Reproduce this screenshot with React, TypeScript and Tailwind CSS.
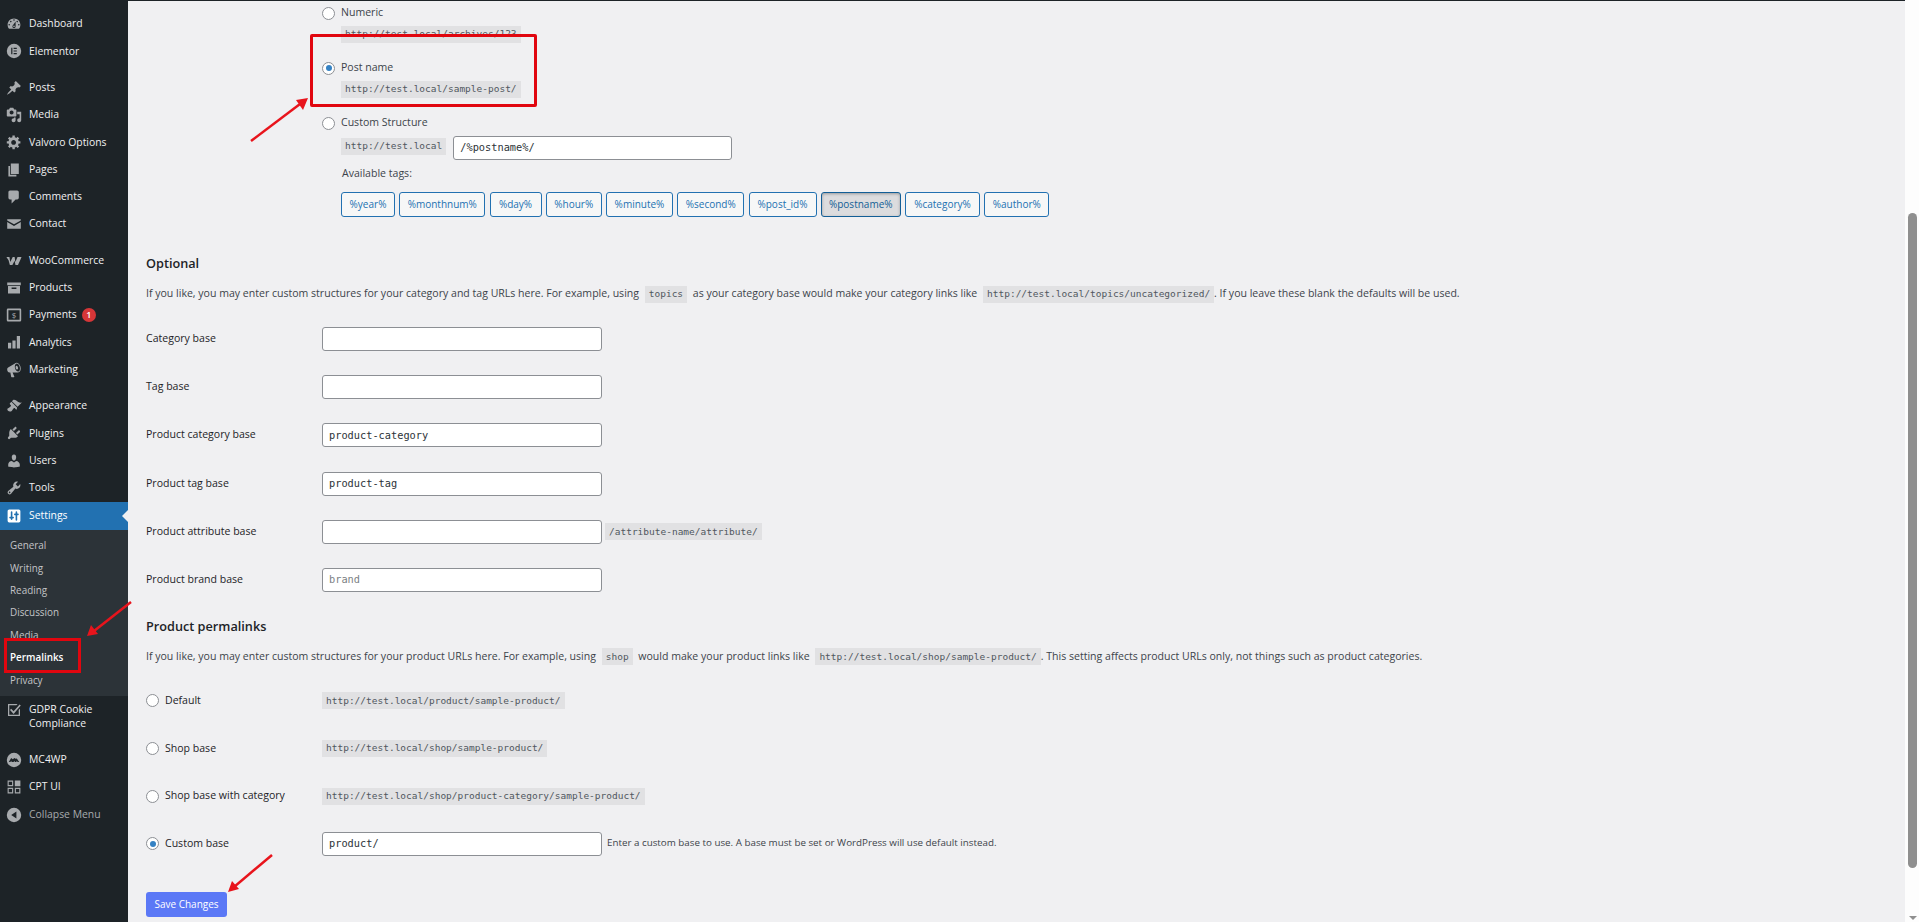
const ic = {
  dashboard:
    "M3.76 16h12.48c1.1-1.37 1.76-3.11 1.76-5 0-4.42-3.58-8-8-8s-8 3.58-8 8c0 1.89.66 3.63 1.76 5zM10 4c.55 0 1 .45 1 1s-.45 1-1 1-1-.45-1-1 .45-1 1-1zM6 6c.55 0 1 .45 1 1s-.45 1-1 1-1-.45-1-1 .45-1 1-1zm8 0c.55 0 1 .45 1 1s-.45 1-1 1-1-.45-1-1 .45-1 1-1zm-5.37 5.55L12 7v6c0 1.1-.9 2-2 2s-2-.9-2-2c0-.57.24-1.08.63-1.45zM4 10c.55 0 1 .45 1 1s-.45 1-1 1-1-.45-1-1 .45-1 1-1zm12 0c.55 0 1 .45 1 1s-.45 1-1 1-1-.45-1-1 .45-1 1-1zm-5 3c0-.55-.45-1-1-1s-1 .45-1 1 .45 1 1 1 1-.45 1-1z",
  elementor: "M10 1a9 9 0 1 0 0 18a9 9 0 0 0 0-18zM6.5 6H8v8H6.5zM9.5 6h4v1.5h-4zM9.5 9.25h4v1.5h-4zM9.5 12.5h4V14h-4z",
  post: "M10.44 3.02l1.82-1.82 6.36 6.35-1.83 1.82c-1.05-.68-2.48-.57-3.41.36l-.75.75c-.92.93-1.04 2.35-.35 3.41l-1.83 1.82-2.41-2.41-2.8 2.79c-.42.42-3.38 2.71-3.8 2.29s1.86-3.39 2.28-3.81l2.79-2.79L4.1 9.36l1.83-1.82c1.05.69 2.48.57 3.4-.36l.75-.75c.93-.92 1.05-2.35.36-3.41z",
  media:
    "M13 11V4c0-.55-.45-1-1-1h-1.67L9 1H5L3.67 3H2c-.55 0-1 .45-1 1v7c0 .55.45 1 1 1h10c.55 0 1-.45 1-1zM7 4.5c1.38 0 2.5 1.12 2.5 2.5S8.38 9.5 7 9.5 4.5 8.38 4.5 7 5.62 4.5 7 4.5zM14 6h5v10.5c0 1.38-1.12 2.5-2.5 2.5S14 17.88 14 16.5s1.12-2.5 2.5-2.5c.17 0 .34.02.5.05V9h-3V6zm-4 8.05V13h2v3.5c0 1.38-1.12 2.5-2.5 2.5S7 17.88 7 16.5 8.12 14 9.5 14c.17 0 .34.02.5.05z",
  gear: "M18 12h-2.18c-.17.7-.44 1.35-.81 1.93l1.54 1.54-2.1 2.1-1.54-1.54c-.58.36-1.23.63-1.91.79V19H8v-2.18c-.68-.16-1.33-.43-1.91-.79l-1.54 1.54-2.12-2.12 1.54-1.54c-.36-.58-.63-1.23-.79-1.91H1V9.03h2.17c.16-.7.44-1.35.8-1.94L2.43 5.55l2.1-2.1 1.54 1.54c.58-.37 1.24-.64 1.93-.81V2h3v2.18c.68.16 1.33.43 1.91.79l1.54-1.54 2.12 2.12-1.54 1.54c.36.59.64 1.24.8 1.94H18V12zm-8.5 1.5c1.66 0 3-1.34 3-3s-1.34-3-3-3-3 1.34-3 3 1.34 3 3 3z",
  page: "M6 15V2h10v13H6zm-1 1h8v2H3V5h2v11z",
  comments: "M5 2h9c1.1 0 2 .9 2 2v7c0 1.1-.9 2-2 2h-2l-5 5v-5H5c-1.1 0-2-.9-2-2V4c0-1.1.9-2 2-2z",
  mail: "M1.5 4h17v1.6L10 10.4 1.5 5.6zM1.5 7.6L10 12.4l8.5-4.8V16h-17z",
  woo: "M.5 5h3.8l1 6.2L8.4 5h2.4l.9 6.2L14.4 5h5c-1.2 3.2-3 7-4.4 10h-3.2l-1-5.4L8 15H4.8L3.2 9z",
  box: "M1.5 3h17v3.5h-17zM2.5 7.5h15V17h-15zM7 9.5v1.6h6V9.5z",
  bars: "M2.5 11h4v7h-4zM8 8h4v10H8zM13.5 2.5h4V18h-4z",
  megaphone:
    "M18.15 5.94c.46 1.62.38 3.22-.02 4.48-.42 1.28-1.26 2.18-2.3 2.48-.16.06-.26.06-.4.06-.06.02-.12.02-.18.02-.06.02-.14.02-.22.02h-6.8l2.22 5.5c.02.14-.06.26-.14.34-.08.1-.24.16-.34.16H6.95c-.1 0-.26-.06-.34-.16-.08-.08-.16-.2-.14-.34l-1-5.5H4.25l-.02-.02c-.5.06-1.08-.18-1.54-.62s-.88-1.08-1.06-1.88c-.24-.8-.2-1.56-.02-2.2.18-.62.58-1.08 1.06-1.3l.02-.02 9-5.4c.1-.06.18-.1.24-.16.06-.04.14-.08.24-.12.16-.08.28-.12.5-.18 1.04-.3 2.24.1 3.22 1 .98.88 1.8 2.24 2.26 3.86zm-2.58 5.98h-.02c.4-.1.74-.34 1.04-.7.58-.7.86-1.76.86-3.04-.02-.64-.1-1.3-.28-1.98-.34-1.36-1.02-2.5-1.78-3.24s-1.68-1.1-2.46-.88c-.82.22-1.4.96-1.7 2-.32 1.04-.28 2.36.06 3.72.38 1.36 1 2.5 1.8 3.24.78.74 1.62 1.1 2.48.88zm-2.54-7.08c.22-.04.42-.02.62.04.38.16.76.48 1.02 1s.42 1.2.42 1.78c0 .3-.04.56-.12.8-.18.48-.44.84-.86.94-.34.1-.8-.06-1.14-.4-.36-.34-.66-.84-.82-1.46-.34-1.24-.08-2.44.88-2.7z",
  brush:
    "M14.48 11.06L7.41 3.99l1.5-1.5c.5-.56 2.3-.47 3.51.32 1.21.8 1.43 1.28 2.91 2.1 1.18.64 2.45 1.26 4.45.85zm-.71.71L6.7 4.7 4.93 6.47c-.39.39-.39 1.02 0 1.41l1.06 1.06c.39.39.39 1.03 0 1.42-.6.6-1.43 1.11-2.21 1.69-.35.26-.7.53-1.01.84C1.43 13.23 1.28 14.7 2.5 16c.51.51 1.5 1 2.5 1 .7 0 1.54-.32 2.14-.86.33-.31.61-.66.87-1.01.58-.78 1.09-1.61 1.69-2.21.39-.39 1.03-.39 1.42 0l1.06 1.06c.39.39 1.02.39 1.41 0z",
  plug: "M13.11 4.36L9.87 7.6 8 5.73l3.24-3.24c.35-.34 1.05-.2 1.56.32.52.51.66 1.21.31 1.55zm-8 1.77l.91-1.12 9.01 9.01-1.19.84c-.71.71-2.63 1.16-3.82 1.16H6.14L4.9 17.26c-.59.59-1.54.59-2.12 0-.59-.58-.59-1.53 0-2.12l1.24-1.24v-3.88c0-1.13.4-3.19 1.09-3.89zm7.26 3.97l3.24-3.24c.34-.35 1.04-.21 1.55.31.52.51.66 1.21.31 1.55l-3.24 3.25z",
  users:
    "M10 9.25c-2.27 0-2.73-3.44-2.73-3.44C7 4.02 7.82 2 9.97 2c2.16 0 2.98 2.02 2.71 3.81 0 0-.41 3.44-2.68 3.44zm0 2.57L12.72 10c2.39 0 4.52 2.33 4.52 4.53v2.49s-3.65 1.13-7.24 1.13c-3.65 0-7.24-1.13-7.24-1.13v-2.49c0-2.25 1.94-4.48 4.47-4.48z",
  tools:
    "M16.68 9.77c-1.34 1.34-3.3 1.67-4.95.99l-5.41 6.52c-.99.99-2.59.99-3.58 0s-.99-2.59 0-3.57l6.52-5.42c-.68-1.65-.35-3.61.99-4.95 1.28-1.28 3.12-1.62 4.72-1.06l-2.89 2.89 2.82 2.82 2.86-2.87c.53 1.58.18 3.39-1.08 4.65zM3.81 16.21c.4.39 1.04.39 1.43 0 .4-.4.4-1.04 0-1.43-.39-.4-1.03-.4-1.43 0-.39.39-.39 1.03 0 1.43z",
  settings:
    "M18 16V4c0-1.1-.9-2-2-2H4c-1.1 0-2 .9-2 2v12c0 1.1.9 2 2 2h12c1.1 0 2-.9 2-2zM8 11h1c.55 0 1 .45 1 1s-.45 1-1 1H8v1c0 .55-.45 1-1 1s-1-.45-1-1v-1H5c-.55 0-1-.45-1-1s.45-1 1-1h1V5c0-.55.45-1 1-1s1 .45 1 1v6zm7-2h-1v6c0 .55-.45 1-1 1s-1-.45-1-1V9h-1c-.55 0-1-.45-1-1s.45-1 1-1h1V5c0-.55.45-1 1-1s1 .45 1 1v2h1c.55 0 1 .45 1 1s-.45 1-1 1z",
  gdpr: "M3.5 2.5h11l-1.6 1.6H4.1v11.8h11.8V10l1.6-1.6V17.5h-15v-15zM6.5 8.5l3 3 7.5-8.5 1.5 1.5-9 10.5-4.5-5z",
  mc4wp: "M10 1a9 9 0 1 0 0 18a9 9 0 0 0 0-18zM3.5 12.5l3-5 2 1.5 2-1.5 1.5 1 1.5-.5 3 4.5h-2l-1-1.5-.5 1.5h-2l-.5-1.5-1 1.5H7l-.5-1.5-1 1.5z",
  cpt: "M2 2h7v7H2zM3.4 3.4v4.2h4.2V3.4zM11 2h7v7h-7zM2 11h7v7H2zM3.4 12.4v4.2h4.2v-4.2zM11 11h7v7h-7zM12.4 12.4v4.2h4.2v-4.2z",
  collapse: "M10 1a9 9 0 1 0 0 18a9 9 0 0 0 0-18zM13 5.5v9L6.5 10z",
};

function Icon({ d, className = "text-[#a7aaad]" }: { d: string; className?: string }) {
  return (
    <svg viewBox="0 0 20 20" className={`h-4 w-4 shrink-0 ${className}`} fill="currentColor">
      <path d={d} fillRule="evenodd" />
    </svg>
  );
}

function MenuItem({ icon, label }: { icon: string; label: string }) {
  return (
    <div className="flex h-[27.3px] items-center pl-[6px] text-[#f0f0f1]">
      <Icon d={icon} />
      <span className="ml-[7px]">{label}</span>
    </div>
  );
}

function Sidebar() {
  return (
    <aside className="w-[128px] shrink-0 bg-[#1d2327] pt-[10.5px] text-[10.4px]">
      <MenuItem icon={ic.dashboard} label="Dashboard" />
      <MenuItem icon={ic.elementor} label="Elementor" />
      <div className="h-[9px]" />
      <MenuItem icon={ic.post} label="Posts" />
      <MenuItem icon={ic.media} label="Media" />
      <MenuItem icon={ic.gear} label="Valvoro Options" />
      <MenuItem icon={ic.page} label="Pages" />
      <MenuItem icon={ic.comments} label="Comments" />
      <MenuItem icon={ic.mail} label="Contact" />
      <div className="h-[9px]" />
      <MenuItem icon={ic.woo} label="WooCommerce" />
      <MenuItem icon={ic.box} label="Products" />
      <div className="flex h-[27.3px] items-center pl-[6px] text-[#f0f0f1]">
        <svg viewBox="0 0 20 20" className="h-4 w-4 shrink-0 text-[#a7aaad]" fill="none" stroke="currentColor" strokeWidth="2">
          <rect x="2" y="3" width="16" height="14" rx="0.5" />
          <text x="10" y="14" textAnchor="middle" fontSize="10" fill="currentColor" stroke="none">$</text>
        </svg>
        <span className="ml-[7px]">Payments</span>
        <span className="ml-[5px] flex h-[14px] w-[14px] items-center justify-center rounded-full bg-[#d63638] text-[9px] font-semibold text-white">
          1
        </span>
      </div>
      <MenuItem icon={ic.bars} label="Analytics" />
      <MenuItem icon={ic.megaphone} label="Marketing" />
      <div className="h-[9px]" />
      <MenuItem icon={ic.brush} label="Appearance" />
      <MenuItem icon={ic.plug} label="Plugins" />
      <MenuItem icon={ic.users} label="Users" />
      <MenuItem icon={ic.tools} label="Tools" />
      <div className="relative flex h-[28px] items-center bg-[#2271b1] pl-[6px] text-white">
        <Icon d={ic.settings} className="text-white" />
        <span className="ml-[7px]">Settings</span>
        <span className="absolute right-0 top-[8px] h-0 w-0 border-y-[6px] border-r-[6px] border-y-transparent border-r-[#f0f0f1]" />
      </div>
      <div className="bg-[#2c3338] pb-[5px] pt-[5px] text-[9.9px] text-[#c3c4c7]">
        {["General", "Writing", "Reading", "Discussion", "Media"].map((s) => (
          <div key={s} className="flex h-[22.4px] items-center pl-[10px]">
            {s}
          </div>
        ))}
        <div className="flex h-[22.4px] items-center pl-[10px] font-semibold text-white">Permalinks</div>
        <div className="flex h-[22.4px] items-center pl-[10px]">Privacy</div>
      </div>
      <div className="flex h-[41px] items-start pl-[6px] pt-[6px] leading-[14px] text-[#f0f0f1]">
        <Icon d={ic.gdpr} />
        <span className="ml-[7px]">
          GDPR Cookie
          <br />
          Compliance
        </span>
      </div>
      <div className="h-[9px]" />
      <MenuItem icon={ic.mc4wp} label="MC4WP" />
      <MenuItem icon={ic.cpt} label="CPT UI" />
      <div className="flex h-[27.3px] items-center pl-[6px] text-[#a7aaad]">
        <Icon d={ic.collapse} />
        <span className="ml-[7px]">Collapse Menu</span>
      </div>
    </aside>
  );
}

function Radio({ checked }: { checked?: boolean }) {
  return (
    <span className="flex h-[13px] w-[13px] shrink-0 items-center justify-center rounded-full border border-[#8c8f94] bg-white">
      {checked && <span className="h-[6px] w-[6px] rounded-full bg-[#3582c4]" />}
    </span>
  );
}

function Code({ children, className = "" }: { children: string; className?: string }) {
  return (
    <code
      className={`inline-flex h-[17px] items-center bg-[#e1e1e3] px-[4px] font-['DejaVu_Sans_Mono',monospace] text-[9.5px] text-[#50575e] ${className}`}
    >
      {children}
    </code>
  );
}

function TextBox({ value, placeholder, wide }: { value?: string; placeholder?: string; wide?: boolean }) {
  return (
    <div
      className={`flex h-[24px] shrink-0 items-center rounded-[3px] border border-[#8c8f94] bg-white px-[6px] font-['DejaVu_Sans_Mono',monospace] text-[10.3px] ${
        wide ? "w-[279px]" : "w-[280px]"
      } ${placeholder ? "text-[#7b7f84]" : "text-[#2c3338]"}`}
    >
      {value ?? placeholder}
    </div>
  );
}

const tags: [string, number][] = [
  ["%year%", 54],
  ["%monthnum%", 86],
  ["%day%", 52],
  ["%hour%", 56],
  ["%minute%", 67],
  ["%second%", 67],
  ["%post_id%", 68],
  ["%postname%", 80],
  ["%category%", 75],
  ["%author%", 65],
];

const baseRows = [
  { label: "Category base" },
  { label: "Tag base" },
  { label: "Product category base", value: "product-category" },
  { label: "Product tag base", value: "product-tag" },
  { label: "Product attribute base", hint: "/attribute-name/attribute/" },
  { label: "Product brand base", placeholder: "brand" },
];

const productRows = [
  { label: "Default", url: "http://test.local/product/sample-product/" },
  { label: "Shop base", url: "http://test.local/shop/sample-product/" },
  { label: "Shop base with category", url: "http://test.local/shop/product-category/sample-product/" },
];

function Main() {
  return (
    <main className="min-w-0 flex-1 border-t border-[#1d2327] bg-[#f0f0f2] pl-[18px] text-[10.55px] text-[#3c434a]">
      {/* Permalink structure options */}
      <div className="pl-[176px]">
        <div className="flex h-[24px] items-center gap-[6px]">
          <Radio />
          <span>Numeric</span>
        </div>
        <div className="mt-px pl-[19px]">
          <Code>http://test.local/archives/123</Code>
        </div>
        <div className="mt-[13px] flex h-[24px] items-center gap-[6px]">
          <Radio checked />
          <span>Post name</span>
        </div>
        <div className="mt-px pl-[19px]">
          <Code>http://test.local/sample-post/</Code>
        </div>
        <div className="mt-[13px] flex h-[24px] items-center gap-[6px]">
          <Radio />
          <span>Custom Structure</span>
        </div>
        <div className="mt-px flex items-start pl-[19px]">
          <Code className="mt-[2px]">http://test.local</Code>
          <div className="ml-[7px]">
            <TextBox value="/%postname%/" wide />
          </div>
        </div>
        <div className="mt-[2px] flex h-[24px] items-center pl-[20px]">Available tags:</div>
        <div className="mt-[6px] flex gap-[4.25px] pl-[19px] text-[10px]">
          {tags.map(([t, w]) => (
            <span
              key={t}
              style={{ width: w }}
              className={
                t === "%postname%"
                  ? "flex h-[25px] items-center justify-center rounded-[3px] border border-[#135e96] bg-[#dcdcde] text-[#135e96] shadow-[inset_0_1px_3px_rgba(0,0,0,0.3)]"
                  : "flex h-[25px] items-center justify-center rounded-[3px] border border-[#2271b1] bg-[#f6f7f7] text-[#2271b1]"
              }
            >
              {t}
            </span>
          ))}
        </div>
      </div>

      {/* Optional */}
      <h2 className="mt-[37px] flex h-[20px] items-center text-[12.7px] font-semibold text-[#1d2327]">Optional</h2>
      <p className="mt-[11px] flex h-[18px] items-center whitespace-pre">
        If you like, you may enter custom structures for your category and tag URLs here. For example, using{" "}
        <Code className="mx-[3px]">topics</Code> as your category base would make your category links like{" "}
        <Code className="ml-[3px]">http://test.local/topics/uncategorized/</Code>. If you leave these blank the defaults will be used.
      </p>
      <div className="mt-[24px] flex flex-col gap-[24.2px]">
        {baseRows.map((r) => (
          <div key={r.label} className="flex items-center">
            <label className="w-[176px] shrink-0 font-medium text-[#1d2327]">{r.label}</label>
            <TextBox value={r.value} placeholder={r.placeholder} />
            {r.hint && <Code className="ml-[3px]">{r.hint}</Code>}
          </div>
        ))}
      </div>

      {/* Product permalinks */}
      <h2 className="mt-[25px] flex h-[20px] items-center text-[12.7px] font-semibold text-[#1d2327]">Product permalinks</h2>
      <p className="mt-[11px] flex h-[18px] items-center whitespace-pre">
        If you like, you may enter custom structures for your product URLs here. For example, using{" "}
        <Code className="mx-[3px]">shop</Code> would make your product links like{" "}
        <Code className="ml-[3px]">http://test.local/shop/sample-product/</Code>. This setting affects product URLs only, not things such as product categories.
      </p>
      <div className="mt-[23px] flex flex-col gap-[23.6px]">
        {productRows.map((r) => (
          <div key={r.label} className="flex h-[24px] items-center">
            <label className="flex w-[176px] shrink-0 items-center gap-[6px] font-medium text-[#1d2327]">
              <Radio />
              {r.label}
            </label>
            <Code>{r.url}</Code>
          </div>
        ))}
        <div className="flex h-[24px] items-center">
          <label className="flex w-[176px] shrink-0 items-center gap-[6px] font-medium text-[#1d2327]">
            <Radio checked />
            Custom base
          </label>
          <TextBox value="product/" />
          <span className="ml-[5px] text-[9.8px]">Enter a custom base to use. A base must be set or WordPress will use default instead.</span>
        </div>
      </div>
      <button className="mt-[36px] flex h-[25px] w-[81px] items-center justify-center rounded-[3px] bg-[#5b78f6] text-[10px] text-white">
        Save Changes
      </button>
    </main>
  );
}

function Scrollbar() {
  return (
    <div className="flex w-[14px] shrink-0 flex-col items-start bg-[#fdfdfd] pl-[3px]">
      <div className="mt-[213px] h-[655px] w-[9px] rounded-full bg-[#8f8f8f]" />
      <div className="ml-[1px] mt-[48px] h-0 w-0 border-x-[4px] border-t-[4px] border-x-transparent border-t-[#8f8f8f]" />
    </div>
  );
}

export default function App() {
  return (
    <div className="relative flex h-[922px] overflow-hidden font-['Open_Sans',sans-serif]">
      <Sidebar />
      <Main />
      <Scrollbar />

      {/* Red annotations drawn over the screenshot */}
      <div className="absolute left-[310px] top-[34px] h-[73px] w-[227px] rounded-[2px] border-[3px] border-[#e1060f]" />
      <div className="absolute left-[4px] top-[638px] h-[35px] w-[77px] border-[3px] border-[#e1060f]" />
      <svg className="pointer-events-none absolute left-0 top-0" width="400" height="922" fill="none">
        <g stroke="#e8141c" strokeWidth="2.5">
          <path d="M251 141 300 104" />
          <path d="M131 602 94 631" />
          <path d="M272 855 234 887" />
        </g>
        <g fill="#e8141c">
          <path d="M308 98 296 100 303 110z" />
          <path d="M87 636 98 634 91 625z" />
          <path d="M228 892 239 889 232 881z" />
        </g>
      </svg>
    </div>
  );
}
